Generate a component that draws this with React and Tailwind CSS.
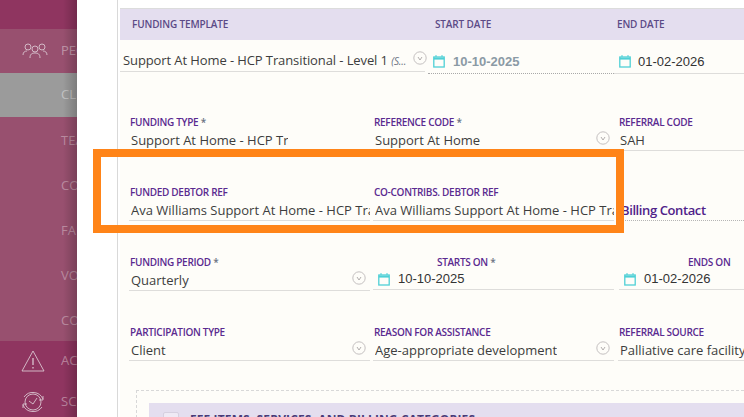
import React from "react";

const font = { fontFamily: '"Open Sans", "Noto Sans", sans-serif' };
const dateFont = { fontFamily: '"Liberation Sans", sans-serif' };

function Chevron({ className = "" }) {
  return (
    <svg width="14" height="14" viewBox="0 0 14 14" fill="none" className={`shrink-0 ${className}`}>
      <circle cx="7" cy="7" r="6.2" stroke="#c4c0c0" strokeWidth="1" />
      <path d="M5 6l2 3 2-3" stroke="#a9a5a5" strokeWidth="0.9" />
    </svg>
  );
}

function Calendar({ className = "" }) {
  return (
    <svg width="12" height="13" viewBox="0 0 12 13" fill="none" className={`shrink-0 ${className}`}>
      <rect x="0.8" y="2" width="10.4" height="10" stroke="#4fd0d6" strokeWidth="1.3" />
      <path d="M0.8 3.6h10.4" stroke="#4fd0d6" strokeWidth="2" />
      <path d="M3 0v2M9 0v2" stroke="#4fd0d6" strokeWidth="1" />
    </svg>
  );
}

function Label({ children, star, className = "" }) {
  return (
    <div className={`text-[10px] leading-[14px] font-semibold tracking-[-0.3px] text-[#5a2a90] whitespace-nowrap ${className}`}>
      {children}
      {star && <span className="text-gray-500"> *</span>}
    </div>
  );
}

function Field({ label, value, star, chevron, className = "" }) {
  return (
    <div className={`min-w-0 ${className}`}>
      <Label star={star} className="pl-[1px]">{label}</Label>
      <div className="h-[22px] pt-[2px] flex items-center justify-between border-b border-[#dedddb] pl-[2px] text-[13px] text-[#3d3d3d] overflow-hidden whitespace-nowrap">
        <span className="overflow-hidden">{value}</span>
        {chevron && <Chevron className="mr-[4px] -mt-[5px]" />}
      </div>
    </div>
  );
}

function DateField({ label, value, star, labelClass = "", className = "" }) {
  return (
    <div className={`min-w-0 ${className}`}>
      <Label star={star} className={labelClass}>{label}</Label>
      <div className="h-[21px] flex items-center gap-[8px] border-b border-[#dedddb] pl-[5px] whitespace-nowrap">
        <Calendar />
        <span className="text-[13px] text-[#333]" style={dateFont}>{value}</span>
      </div>
    </div>
  );
}

function Row({ children, className = "h-[70px]" }) {
  return <div className={`flex gap-[3px] pl-[9px] pt-[2px] ${className}`}>{children}</div>;
}

function NavBand({ className = "", children }) {
  return <div className={`flex items-center text-[13px] text-white/40 ${className}`}>{children}</div>;
}

export default function App() {
  return (
    <div className="w-[744px] h-[417px] overflow-hidden flex bg-white" style={font}>
      {/* SIDEBAR */}
      <div className="relative w-[77px] shrink-0 flex flex-col overflow-hidden bg-[#8f3560]">
        <div className="h-[29px] shrink-0" />
        <NavBand className="h-[44px] shrink-0 bg-[#98506f]">
          <svg width="26" height="16" viewBox="0 0 26 16" fill="none" stroke="#d9c4cf" strokeWidth="0.9" className="ml-[22px] shrink-0">
            <circle cx="6" cy="4" r="3" />
            <circle cx="13" cy="6" r="3" />
            <circle cx="20" cy="4" r="3" />
            <path d="M1 12c0-3 2-4 4-4M25 12c0-3-2-4-4-4M8 15c0-4 2-5 5-5s5 1 5 5" />
          </svg>
          <span className="ml-[13px] whitespace-nowrap">PEOPLE</span>
        </NavBand>
        <NavBand className="h-[44px] shrink-0 bg-[#9b9b9b] text-[#8a4a6a]">
          <span className="ml-[61px] whitespace-nowrap">CLIENTS</span>
        </NavBand>
        <div className="h-[224px] shrink-0 bg-[#98506f] flex flex-col pl-[61px] text-[13px] leading-[20px] text-white/35 pt-[13px] gap-[25px]">
          <span className="whitespace-nowrap">TEAMS</span>
          <span className="whitespace-nowrap">CONTACTS</span>
          <span className="whitespace-nowrap">FAMILY</span>
          <span className="whitespace-nowrap">VOLUNTEERS</span>
          <span className="whitespace-nowrap">COORDINATORS</span>
        </div>
        <NavBand className="h-[40px] shrink-0">
          <svg width="24" height="22" viewBox="0 0 24 22" fill="none" stroke="#d9c4cf" strokeWidth="0.9" className="ml-[21px] shrink-0">
            <path d="M12 1L23 21H1z" strokeLinejoin="round" />
            <path d="M12 8v7M12 17v1.5" strokeWidth="1.3" />
          </svg>
          <span className="ml-[16px] whitespace-nowrap">ACTIONS</span>
        </NavBand>
        <NavBand className="h-[42px] shrink-0">
          <svg width="26" height="26" viewBox="0 0 26 26" fill="none" stroke="#d9c4cf" strokeWidth="0.9" className="ml-[20px] shrink-0">
            <path d="M4 8a11 11 0 0 1 19 2M22 18a11 11 0 0 1-19-2" />
            <circle cx="13" cy="13" r="8" />
            <path d="M9 12l4 3 4-6" />
            <path d="M23 7v4h-4M3 19v-4h4" />
          </svg>
          <span className="ml-[15px] whitespace-nowrap">SCHEDULE</span>
        </NavBand>
        <div className="absolute inset-y-0 right-0 w-[14px] bg-gradient-to-r from-transparent to-black/20" />
      </div>

      {/* GUTTER */}
      <div className="w-[40px] shrink-0 bg-white" />

      {/* PANEL */}
      <div className="flex-1 min-w-0 border-l border-[#d9d9d9] pt-[8px] bg-white">
        <div className="h-full bg-[#fefdf9] ml-[2px]">
          <div className="h-[32px] flex items-center bg-[#e4deef] border-t border-[#dcdcdc] text-[10px] font-semibold tracking-[-0.15px] text-[#5b4a86]">
            <span className="w-[315px] pl-[12px]">FUNDING TEMPLATE</span>
            <span className="w-[182px]">START DATE</span>
            <span>END DATE</span>
          </div>

          {/* TEMPLATE ROW */}
          <div className="h-[73px] flex pt-[8px]">
            <div className="w-[305px] shrink-0 h-[24px] pl-[3px] pt-[3px] flex items-center justify-between border-b border-[#dedddb] text-[13px] tracking-[-0.1px] text-[#3d3d3d] whitespace-nowrap">
              <span>
                Support At Home - HCP Transitional - Level 1 <i className="text-[10px] text-gray-500">(S...</i>
              </span>
              <Chevron className="-mt-[7px] mr-[-2px]" />
            </div>
            <div className="w-[186px] shrink-0 ml-[3px] h-[26px] pt-[2px] pl-[5px] flex items-center gap-[8px] border-b border-dotted border-[#a9a9a9] whitespace-nowrap">
              <Calendar />
              <span className="text-[13px] font-bold text-[#8b9aa5]" style={dateFont}>10-10-2025</span>
            </div>
            <div className="flex-1 min-w-0 h-[26px] pt-[2px] pl-[5px] flex items-center gap-[7px] border-b border-[#dedddb] whitespace-nowrap">
              <Calendar />
              <span className="text-[13px] text-[#333]" style={dateFont}>01-02-2026</span>
            </div>
          </div>

          <Row>
            <Field className="w-[241px] shrink-0" label="FUNDING TYPE" star value={<span className="inline-block w-[157px] overflow-hidden align-bottom">Support At Home - HCP Transitional</span>} />
            <Field className="w-[241px] shrink-0" label="REFERENCE CODE" star value="Support At Home" chevron />
            <Field className="flex-1 ml-[1px]" label="REFERRAL CODE" value="SAH" />
          </Row>
          <Row>
            <Field className="w-[241px] shrink-0" label="FUNDED DEBTOR REF" value="Ava Williams Support At Home - HCP Transitional" />
            <Field className="w-[241px] shrink-0" label="CO-CONTRIBS. DEBTOR REF" value="Ava Williams Support At Home - HCP Transitional" />
            <div className="flex-1 min-w-0 h-[36px] flex items-end justify-start border-b border-dotted border-[#b5b5b5] pl-[4px] text-[13px] font-semibold tracking-[-0.4px] text-[#4f2289] whitespace-nowrap">
              Billing Contact
            </div>
          </Row>
          <Row>
            <Field className="w-[241px] shrink-0" label="FUNDING PERIOD" star value="Quarterly" chevron />
            <DateField className="w-[241px] shrink-0" label="STARTS ON" star labelClass="pl-[64px]" value="10-10-2025" />
            <DateField className="flex-1 ml-[2px]" label="ENDS ON" labelClass="pl-[69px]" value="01-02-2026" />
          </Row>
          <Row className="h-[67px]">
            <Field className="w-[241px] shrink-0" label="PARTICIPATION TYPE" value="Client" chevron />
            <Field className="w-[241px] shrink-0" label="REASON FOR ASSISTANCE" value="Age-appropriate development" chevron />
            <Field className="flex-1 ml-[1px]" label="REFERRAL SOURCE" value="Palliative care facility/hospice" />
          </Row>

          {/* FEE ITEMS */}
          <div className="ml-[16px] border-t border-l border-dashed border-[#d8d8d8] pl-[12px] pt-[12px]">
            <div className="h-[40px] bg-[#e4deef] flex items-start pl-[14px] pt-[9px] gap-[11px]">
              <div className="w-[16px] h-[16px] shrink-0 rounded-[2px] border border-[#d6d0e0] bg-[#efeaf5]" />
              <span className="text-[12px] leading-[16px] font-bold tracking-[0.12px] text-[#4a3b78] whitespace-nowrap">FEE ITEMS, SERVICES, AND BILLING CATEGORIES</span>
            </div>
          </div>
        </div>
      </div>

      {/* ORANGE HIGHLIGHT */}
      <div className="absolute left-[93px] top-[149px] w-[531px] h-[84px] border-[8px] border-[#ff8418] pointer-events-none" />
    </div>
  );
}
